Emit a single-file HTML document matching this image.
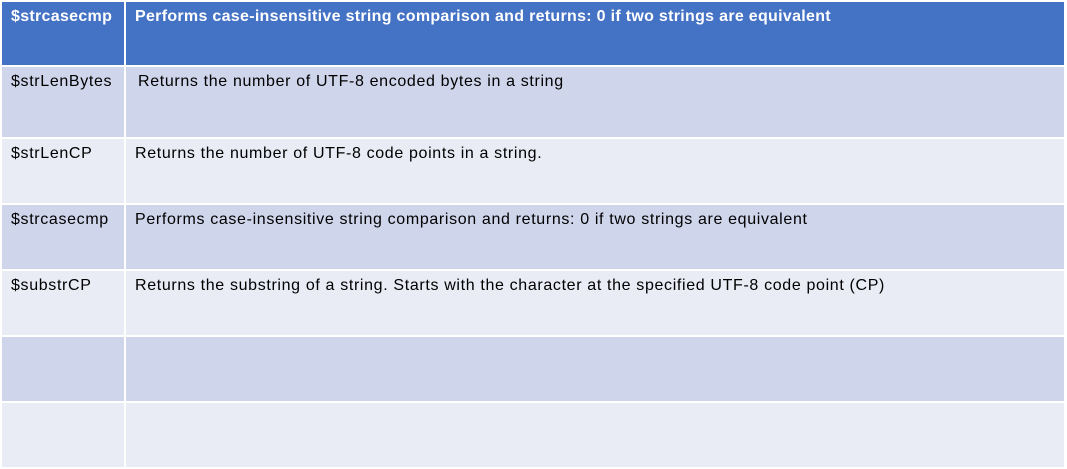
<!DOCTYPE html>
<html><head><style>
body{margin:0;width:1067px;height:469px;background:#fff;position:relative;overflow:hidden;font-family:"Liberation Sans",sans-serif;font-size:16px;color:#000}
.c{position:absolute;box-sizing:border-box;padding:6px 0 0 9px;white-space:nowrap;letter-spacing:0.65px}
.h{background:#4472C4;color:#fff;font-weight:bold;letter-spacing:0.3px}
.d{background:#CFD5EA}
.l{background:#E9EBF5}
</style></head><body>
<div class="c h" style="left:2px;top:2px;width:122px;height:63px">$strcasecmp</div>
<div class="c h" style="left:126px;top:2px;width:938px;height:63px">Performs case-insensitive string comparison and returns: 0 if two strings are equivalent</div>
<div class="c d" style="left:2px;top:67px;width:122px;height:70px">$strLenBytes</div>
<div class="c d" style="left:126px;top:67px;width:938px;height:70px;padding-left:12px">Returns the number of UTF-8 encoded bytes in a string</div>
<div class="c l" style="left:2px;top:139px;width:122px;height:64px">$strLenCP</div>
<div class="c l" style="left:126px;top:139px;width:938px;height:64px">Returns the number of UTF-8 code points in a string.</div>
<div class="c d" style="left:2px;top:205px;width:122px;height:64px">$strcasecmp</div>
<div class="c d" style="left:126px;top:205px;width:938px;height:64px">Performs case-insensitive string comparison and returns: 0 if two strings are equivalent</div>
<div class="c l" style="left:2px;top:271px;width:122px;height:64px">$substrCP</div>
<div class="c l" style="left:126px;top:271px;width:938px;height:64px">Returns the substring of a string. Starts with the character at the specified UTF-8 code point (CP)</div>
<div class="c d" style="left:2px;top:337px;width:122px;height:64px"></div>
<div class="c d" style="left:126px;top:337px;width:938px;height:64px"></div>
<div class="c l" style="left:2px;top:403px;width:122px;height:64px"></div>
<div class="c l" style="left:126px;top:403px;width:938px;height:64px"></div>
</body></html>
